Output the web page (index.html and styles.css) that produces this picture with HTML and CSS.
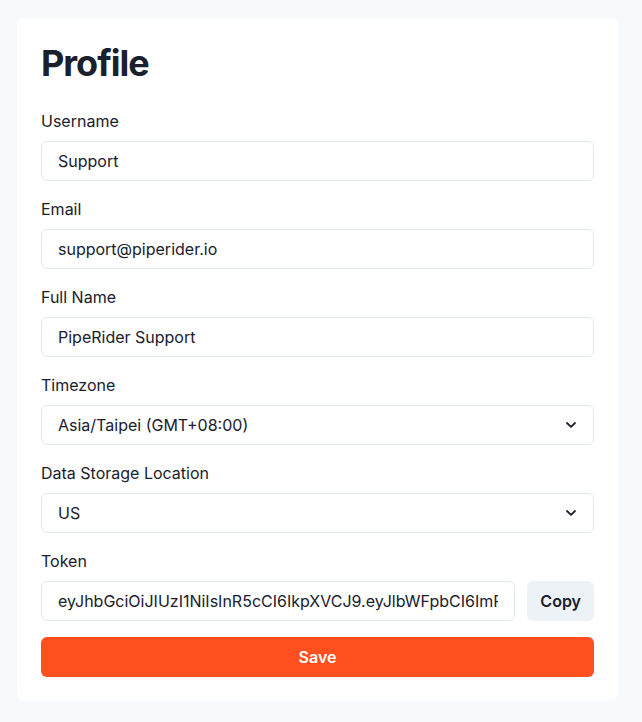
FILE: index.html
```html
<!DOCTYPE html>
<html lang="en">
<head>
<meta charset="utf-8">
<title>Profile</title>
<link rel="stylesheet" href="styles.css">
</head>
<body>
<div class="card">
  <h1 class="title">Profile</h1>
  <div class="field">
    <label class="label">Username</label>
    <input class="input" type="text" value="Support">
  </div>
  <div class="field">
    <label class="label">Email</label>
    <input class="input" type="text" value="support@piperider.io">
  </div>
  <div class="field">
    <label class="label">Full Name</label>
    <input class="input" type="text" value="PipeRider Support">
  </div>
  <div class="field">
    <label class="label">Timezone</label>
    <div class="select-wrap">
      <select class="input select"><option>Asia/Taipei (GMT+08:00)</option></select>
      <svg class="chevron" viewBox="0 0 10 6" width="10" height="6"><path d="M1 1 5 4.8 9 1" fill="none" stroke="currentColor" stroke-width="1.8" stroke-linecap="round" stroke-linejoin="round"/></svg>
    </div>
  </div>
  <div class="field">
    <label class="label">Data Storage Location</label>
    <div class="select-wrap">
      <select class="input select"><option>US</option></select>
      <svg class="chevron" viewBox="0 0 10 6" width="10" height="6"><path d="M1 1 5 4.8 9 1" fill="none" stroke="currentColor" stroke-width="1.8" stroke-linecap="round" stroke-linejoin="round"/></svg>
    </div>
  </div>
  <div class="field">
    <label class="label">Token</label>
    <div class="token-row">
      <input class="input token" type="text" value="eyJhbGciOiJIUzI1NiIsInR5cCI6IkpXVCJ9.eyJlbWFpbCI6ImRldkBwaXBlcmlkZXIuaW8ifQ">
      <button class="copy">Copy</button>
    </div>
  </div>
  <button class="save">Save</button>
</div>
</body>
</html>
```
FILE: styles.css
```css
html, body {
  margin: 0;
  padding: 0;
  background: #f7fafc;
}
body {
  font-family: Inter, "Liberation Sans", sans-serif;
  color: #1a202c;
  padding: 18px 24px 21px 17px;
}
.card {
  background: #ffffff;
  border-radius: 8px;
  padding: 24px;
  display: flex;
  flex-direction: column;
  gap: 16px;
}
.title {
  margin: 0 0 8px 0;
  font-size: 36px;
  line-height: 43px;
  font-weight: 700;
  letter-spacing: -1px;
  color: #1a202c;
}
.field {
  display: flex;
  flex-direction: column;
}
.label {
  font-size: 16px;
  line-height: 24px;
  font-weight: 400;
  margin-bottom: 8px;
}
.input {
  box-sizing: border-box;
  height: 40px;
  width: 100%;
  border: 1px solid #e2e8f0;
  border-radius: 6px;
  padding: 0 16px;
  font-family: inherit;
  font-size: 16px;
  color: #1a202c;
  background: #fff;
  outline: none;
}
.select-wrap {
  position: relative;
}
.select {
  appearance: none;
  -webkit-appearance: none;
  padding-right: 32px;
}
.chevron {
  position: absolute;
  right: 18px;
  top: 17px;
  color: #1a202c;
  pointer-events: none;
}
.token-row {
  display: flex;
  gap: 12px;
}
.token {
  flex: 1;
  min-width: 0;
}
.copy {
  height: 40px;
  padding: 0 13px;
  border: none;
  border-radius: 6px;
  background: #edf2f7;
  font-family: inherit;
  font-size: 16px;
  font-weight: 600;
  color: #1a202c;
}
.save {
  height: 40px;
  width: 100%;
  border: none;
  border-radius: 6px;
  background: #ff4f1f;
  color: #ffffff;
  font-family: inherit;
  font-size: 16px;
  font-weight: 600;
}
```
